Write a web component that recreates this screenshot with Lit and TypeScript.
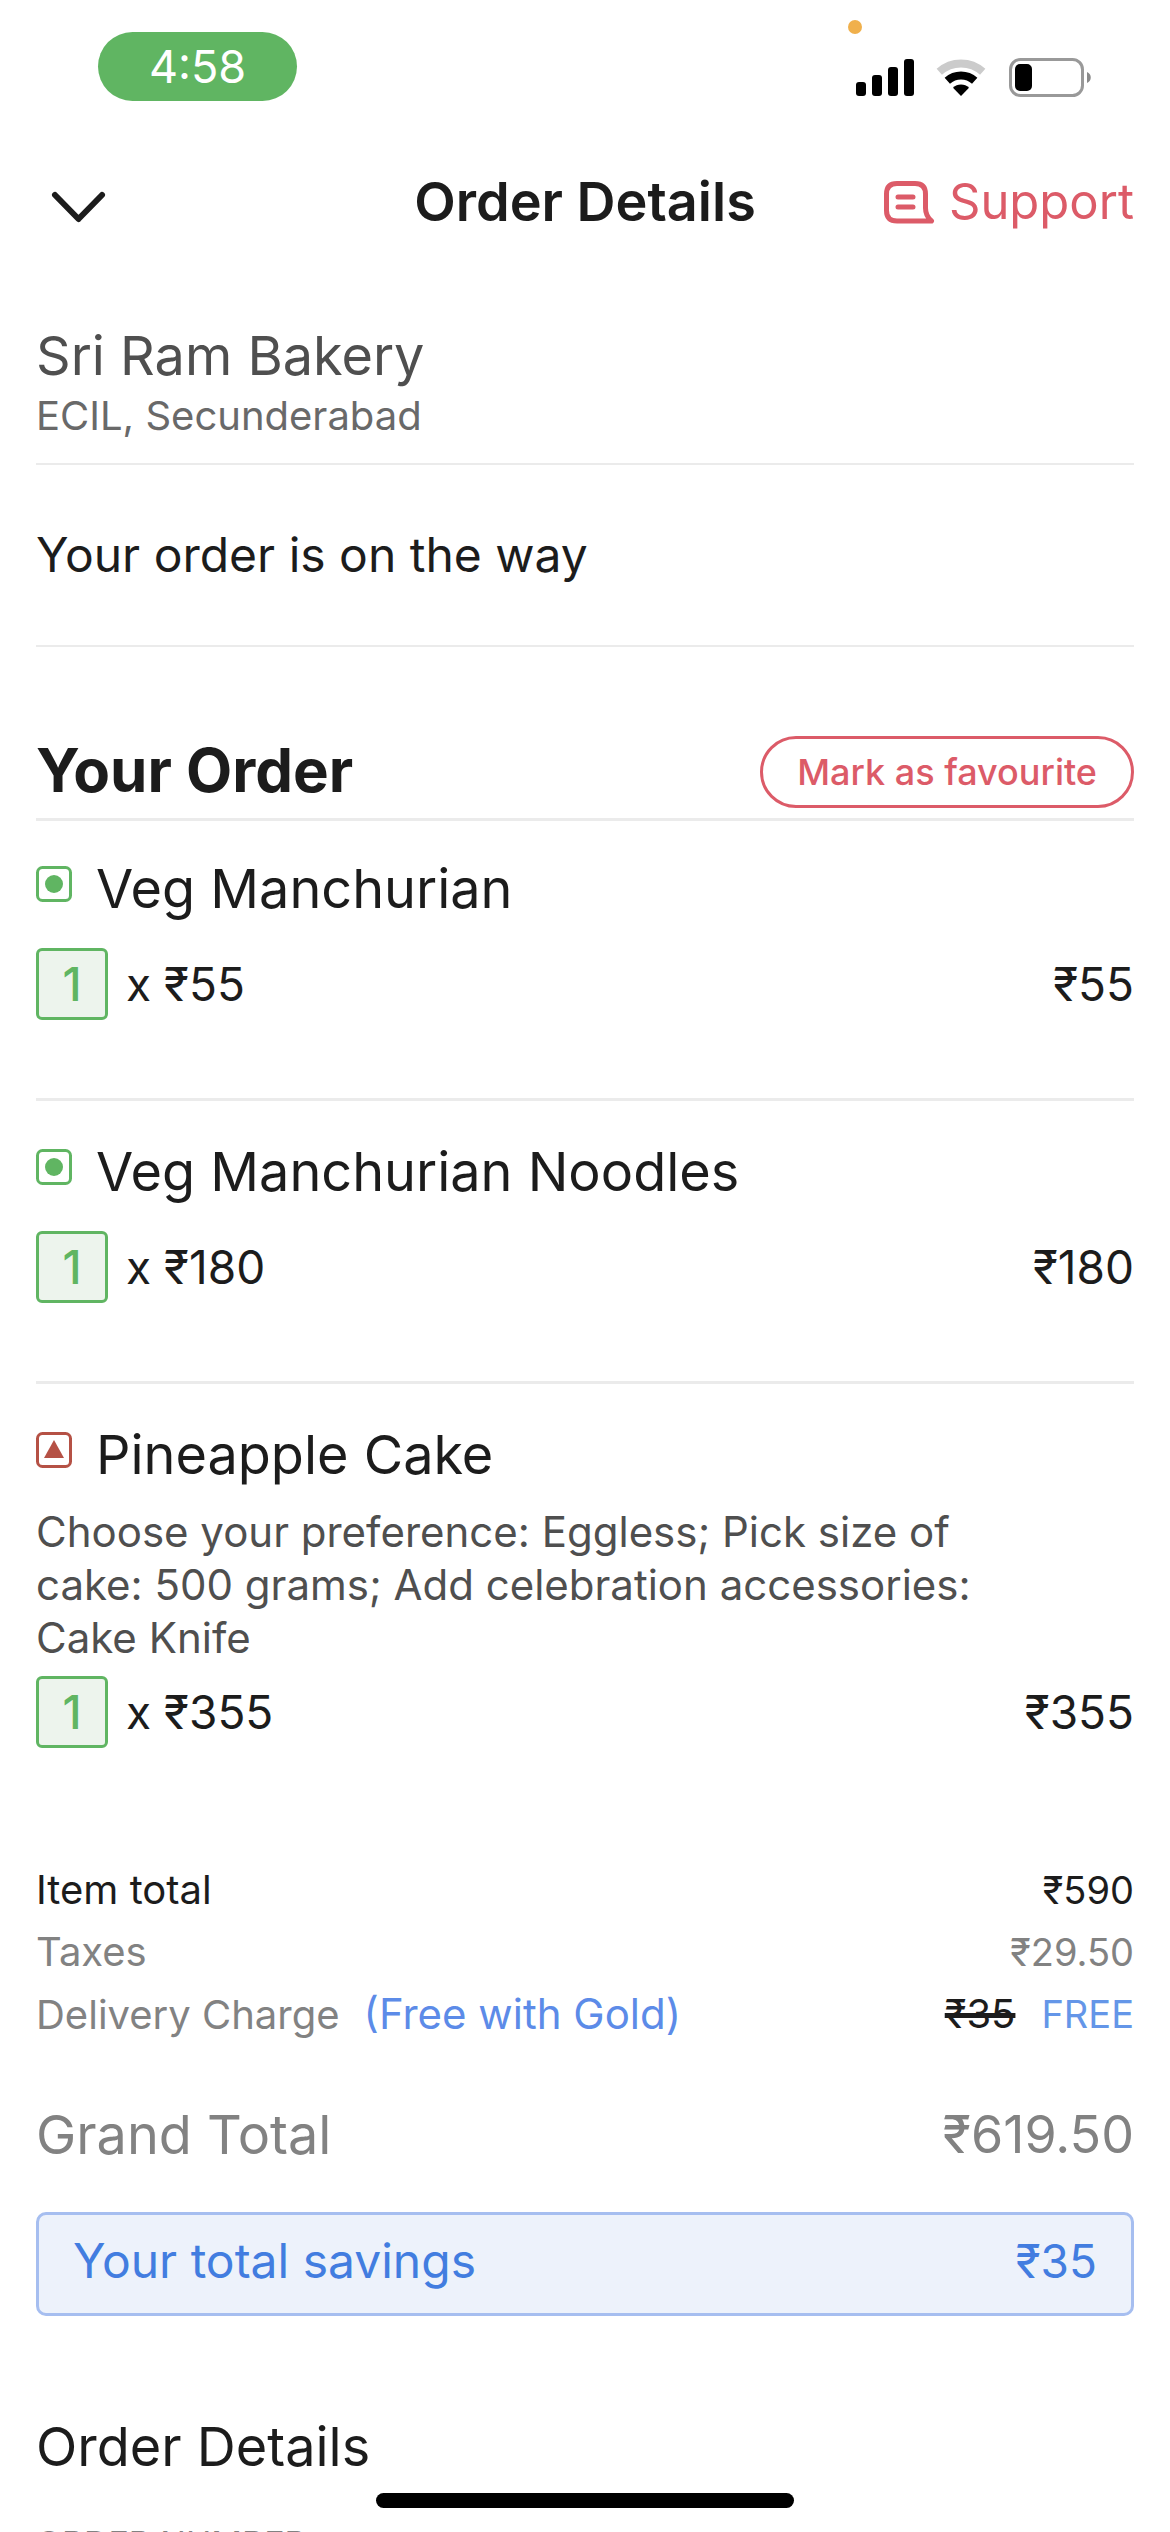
import { LitElement, html, css, svg, nothing } from "lit";
import { customElement, property } from "lit/decorators.js";

interface OrderItem {
  name: string;
  kind: "veg" | "nonveg";
  qty: number;
  price: string;
  note?: string;
}

const ITEMS: OrderItem[] = [
  { name: "Veg Manchurian", kind: "veg", qty: 1, price: "₹55" },
  { name: "Veg Manchurian Noodles", kind: "veg", qty: 1, price: "₹180" },
  {
    name: "Pineapple Cake",
    kind: "nonveg",
    qty: 1,
    price: "₹355",
    note: "Choose your preference: Eggless; Pick size of cake: 500 grams; Add celebration accessories: Cake Knife",
  },
];

@customElement("status-bar")
export class StatusBar extends LitElement {
  static styles = css`
    :host {
      display: flex;
      justify-content: space-between;
      align-items: flex-start;
      box-sizing: border-box;
      height: 132px;
      padding: 20px 78px 0 98px;
    }
    .time {
      margin-top: 12px;
      width: 199px;
      border-radius: 35px;
      background: #60b562;
      color: #fff;
      font-size: 45px;
      line-height: 69px;
      text-align: center;
    }
    .indicators {
      display: grid;
      row-gap: 24px;
    }
    .mic {
      width: 14px;
      height: 14px;
      margin-left: -8px;
      border-radius: 50%;
      background: #f0b04c;
    }
    .icons {
      display: block;
    }
  `;

  render() {
    return html`
      <div class="time">4:58</div>
      <div class="indicators">
        <div class="mic"></div>
        <svg class="icons" width="236" height="39" viewBox="0 0 236 39" role="img" aria-label="Signal, Wi-Fi and battery">
          ${[
            [0, 24],
            [16, 17],
            [32, 9],
            [48, 1],
          ].map(([x, y]) => svg`<rect x=${x} y=${y} width="10" height=${38 - y} rx="3"></rect>`)}
          <path d="M83.300 13.800 A32.500 32.500 0 0 1 126.700 13.800" fill="none" stroke="#cbcbcb" stroke-width="8"></path>
          <path d="M91.300 22.800 A20.500 20.500 0 0 1 118.700 22.800" fill="none" stroke="#000" stroke-width="8"></path>
          <path d="M97 29.800 A11.500 11.500 0 0 1 113 29.800 L105 38 Z"></path>
          <rect x="154.500" y="1.500" width="72" height="36" rx="10" fill="none" stroke="#999" stroke-width="3"></rect>
          <rect x="159" y="6" width="17" height="27" rx="5"></rect>
          <path d="M231 14 C236 16 236 23 231 25 Z" fill="#8a8a8a"></path>
        </svg>
      </div>
    `;
  }
}

@customElement("order-line")
export class OrderLine extends LitElement {
  @property({ attribute: false }) item!: OrderItem;

  static styles = css`
    :host {
      display: block;
      padding: 41px 0 78px;
    }
    .title {
      display: flex;
      gap: 24px;
    }
    .mark {
      flex: none;
      margin-top: 7px;
    }
    .name {
      margin: 0;
      font-size: 54px;
      line-height: 60px;
      font-weight: 400;
    }
    .note {
      margin: 20px 0 12px;
      max-width: 950px;
      color: #4f4f4f;
      font-size: 42px;
      line-height: 53px;
    }
    .amount {
      display: flex;
      align-items: center;
      margin-top: 29px;
      font-size: 46px;
      line-height: 72px;
    }
    .note + .amount {
      margin-top: 0;
    }
    .qty {
      box-sizing: border-box;
      width: 72px;
      height: 72px;
      margin-right: 18px;
      border: 3px solid #60b562;
      border-radius: 6px;
      background: #edf4ed;
      color: #60b562;
      font-weight: 500;
      line-height: 66px;
      text-align: center;
    }
    .total {
      margin-left: auto;
    }
  `;

  render() {
    const { name, kind, qty, price, note } = this.item;
    const veg = kind === "veg";
    const color = veg ? "#60b562" : "#b55145";
    return html`
      <div class="title">
        <svg class="mark" width="36" height="36" viewBox="0 0 36 36" role="img" aria-label=${veg ? "Veg" : "Non-veg"}>
          <rect x="1.500" y="1.500" width="33" height="33" rx="5" fill="none" stroke=${color} stroke-width="3"></rect>
          ${veg
            ? svg`<circle cx="18" cy="18" r="9" fill=${color}></circle>`
            : svg`<path d="M18 8 L28 26 H8 Z" fill=${color}></path>`}
        </svg>
        <h3 class="name">${name}</h3>
      </div>
      ${note ? html`<p class="note">${note}</p>` : nothing}
      <div class="amount">
        <span class="qty">${qty}</span>
        <span>x ${price}</span>
        <span class="total">${price}</span>
      </div>
    `;
  }
}

@customElement("app-root")
export class AppRoot extends LitElement {
  static styles = css`
    :host {
      display: block;
      position: relative;
      height: 100vh;
      overflow: hidden;
      background: #fff;
      color: #1c1c1c;
      font-family: Inter, "Liberation Sans", sans-serif;
    }
    h1,
    h2,
    p,
    dl,
    dd {
      margin: 0;
      font-weight: 400;
    }
    button {
      font: inherit;
      background: none;
      cursor: pointer;
    }
    .nav {
      display: grid;
      grid-template-columns: 1fr auto 1fr;
      align-items: center;
      height: 140px;
      padding: 0 36px;
    }
    .back {
      justify-self: start;
      display: flex;
      padding: 18px 12px 8px;
      border: 0;
    }
    .heading {
      font-size: 54px;
      line-height: 64px;
      font-weight: 600;
    }
    .support {
      justify-self: end;
      display: flex;
      align-items: center;
      gap: 14px;
      color: #dc5b68;
      font-size: 49px;
      line-height: 64px;
      text-decoration: none;
    }
    .content {
      padding: 0 36px;
    }
    .shop {
      padding: 52px 0 19px;
      border-bottom: 2px solid #ebebeb;
    }
    .shop-name {
      color: #4f4f4f;
      font-size: 54px;
      line-height: 64px;
    }
    .shop-area {
      color: #696969;
      font-size: 40px;
      line-height: 56px;
    }
    .progress {
      padding: 60px 0;
      border-bottom: 2px solid #ebebeb;
      font-size: 48px;
      line-height: 60px;
    }
    .order-head {
      display: flex;
      justify-content: space-between;
      align-items: flex-start;
      margin-bottom: -3px;
      padding: 89px 0 10px;
      border-bottom: 3px solid #ebebeb;
    }
    .order-title {
      font-size: 60px;
      line-height: 68px;
      font-weight: 700;
    }
    .favourite {
      height: 72px;
      padding: 0 34px;
      border: 3px solid #dc5b68;
      border-radius: 36px;
      color: #dc5b68;
      font-size: 36px;
      font-weight: 500;
    }
    .line + .line {
      border-top: 3px solid #ebebeb;
    }
    .bill {
      padding-top: 33px;
      color: #828282;
      font-size: 40px;
      line-height: 62px;
    }
    .bill dd {
      font-size: 38px;
    }
    .row {
      display: flex;
      justify-content: space-between;
    }
    .dark {
      color: #1c1c1c;
    }
    .gold {
      margin-left: 24px;
      color: #5c8be8;
      font-size: 42px;
    }
    .was {
      margin-right: 26px;
      color: #1c1c1c;
      font-size: 40px;
      text-decoration: line-through 5px;
    }
    .free {
      color: #6496e8;
    }
    .grand {
      margin-top: 57px;
      font-size: 54px;
      line-height: 64px;
    }
    .bill .grand dd {
      font-size: 52px;
    }
    .savings {
      display: flex;
      justify-content: space-between;
      margin-top: 45px;
      padding: 16px 34px 22px;
      border: 3px solid #a6bef0;
      border-radius: 10px;
      background: #edf2fb;
      color: #427de0;
      font-size: 48px;
      line-height: 60px;
    }
    .savings-amount {
      font-size: 46px;
    }
    .details-title {
      margin-top: 99px;
      font-size: 54px;
      line-height: 64px;
    }
    .details-label {
      margin-top: 40px;
      color: #828282;
      font-size: 34px;
      line-height: 50px;
    }
    .home {
      position: absolute;
      left: 50%;
      bottom: 24px;
      width: 418px;
      height: 15px;
      margin-left: -209px;
      border-radius: 8px;
      background: #000;
    }
  `;

  render() {
    return html`
      <status-bar></status-bar>
      <header class="nav">
        <button class="back" aria-label="Back">
          <svg width="60" height="36" viewBox="0 0 60 36" fill="none" stroke="#1c1c1c" stroke-width="6" stroke-linecap="round" stroke-linejoin="round">
            <path d="M7 6 L30.500 30 L54 6"></path>
          </svg>
        </button>
        <h1 class="heading">Order Details</h1>
        <a class="support" href="#support">
          <svg width="52" height="44" viewBox="0 0 52 44" fill="none" stroke="#dc5b68" stroke-width="5" stroke-linejoin="round" stroke-linecap="round">
            <path d="M14 3.500 H32 Q42.500 3.500 42.500 14 V28 C42.500 34 45 38 48.500 41 H14 Q3.500 41 3.500 30.500 V14 Q3.500 3.500 14 3.500 Z"></path>
            <path d="M15 17 H30 M15 27 H30"></path>
          </svg>
          Support
        </a>
      </header>
      <main class="content">
        <section class="shop">
          <h2 class="shop-name">Sri Ram Bakery</h2>
          <p class="shop-area">ECIL, Secunderabad</p>
        </section>
        <p class="progress">Your order is on the way</p>
        <section>
          <div class="order-head">
            <h2 class="order-title">Your Order</h2>
            <button class="favourite">Mark as favourite</button>
          </div>
          ${ITEMS.map((item) => html`<order-line class="line" .item=${item}></order-line>`)}
        </section>
        <dl class="bill">
          <div class="row dark"><dt>Item total</dt><dd>₹590</dd></div>
          <div class="row"><dt>Taxes</dt><dd>₹29.50</dd></div>
          <div class="row">
            <dt>Delivery Charge<span class="gold">(Free with Gold)</span></dt>
            <dd><s class="was">₹35</s><span class="free">FREE</span></dd>
          </div>
          <div class="row grand"><dt>Grand Total</dt><dd>₹619.50</dd></div>
        </dl>
        <p class="savings"><span>Your total savings</span><span class="savings-amount">₹35</span></p>
        <h2 class="details-title">Order Details</h2>
        <p class="details-label">ORDER NUMBER</p>
      </main>
      <div class="home"></div>
    `;
  }
}
